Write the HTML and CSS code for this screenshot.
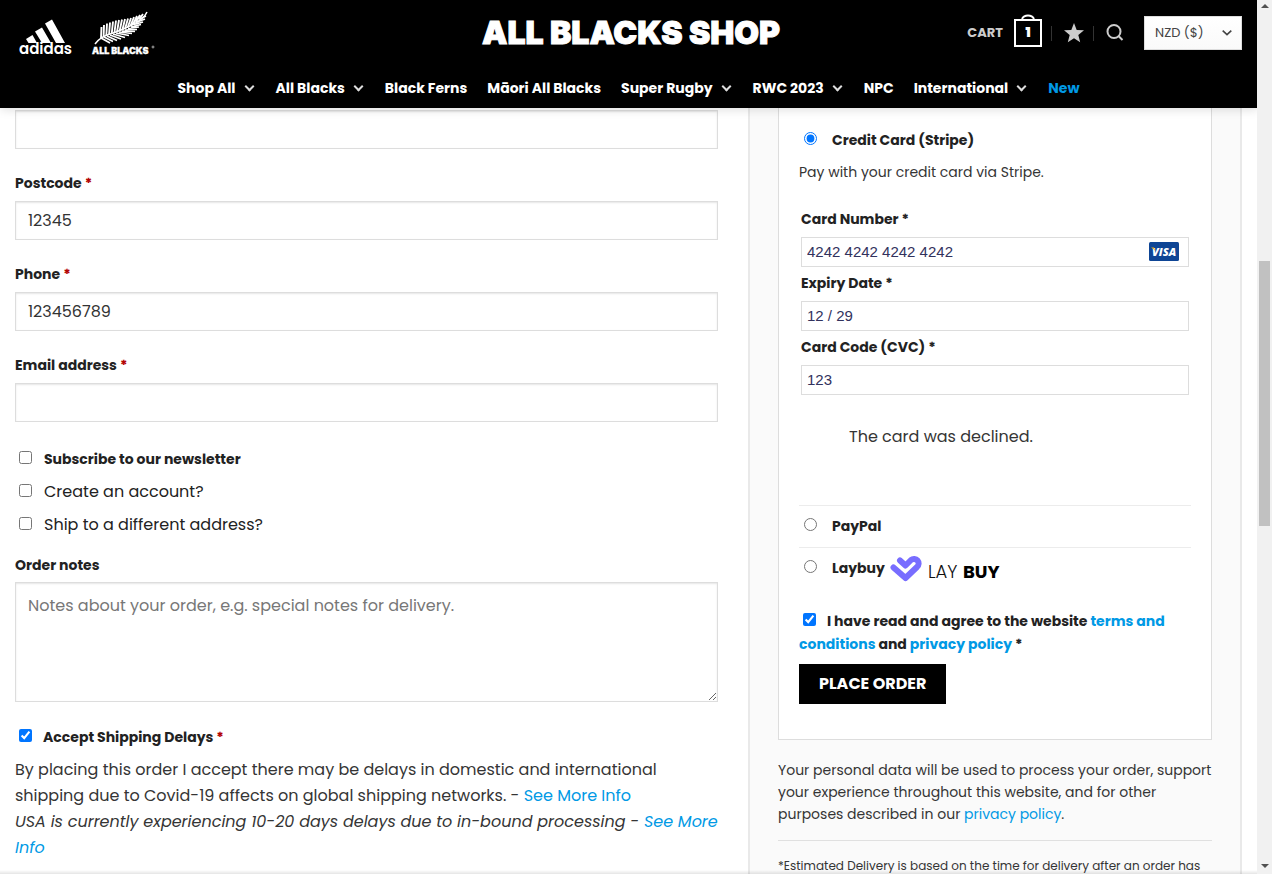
FILE: index.html
```html
<!DOCTYPE html>
<html lang="en">
<head>
<meta charset="utf-8">
<title>Checkout – All Blacks Shop</title>
<link rel="stylesheet" href="styles.css">
</head>
<body>
<div class="shell">
  <div class="page">
    <header class="header">
      <div class="masthead">
        <a class="brands" href="#" aria-label="adidas and All Blacks">
          <svg class="adidas" width="56" height="48" viewBox="0 -5 56 48" fill="#fff">
            <path d="M6 23 12.500 19 17 27H8.500ZM15 15.500 22 11.500 31 27H22ZM25 7.500 32 3.500 45 27H36Z"/>
            <text x="-1" y="38" class="adidas-text">adidas</text>
          </svg>
          <svg class="fern" width="64" height="48" viewBox="0 0 64 48" fill="none" stroke="#fff">
            <path stroke-width="1.500" d="M3 33Q8 26 18 23T40 14T55 1"/>
            <path stroke-width="1.900" d="M9 27 9.500 16M11.600 26 12 14M14.300 25 15 12.500M17 24 18 11.500M19.700 23 21 10.500M22.400 22 24 9.500M25 21 27 9M27.700 20 30 8.500M30.400 19 33 8M33 18 36 7.500M35.700 16.500 39 7M38.400 15 42 6M41 13.500 45 5M44 11 48 4M47 8.500 51 3"/>
            <path stroke-width="1.700" d="M9 27 18 32M12 26 21 30.500M15 25 25 29.500M18 24 29 28M21 23 33 26.500M24 22 37 24.500M27 21 40 22.500M30 20 43 20.500M33 19 45 18.500M36 17.500 47 16M39 16 49 13.500M42 13.500 51 11M45 11 53 8M48 8 54 5"/>
            <text x="0" y="43" class="fern-text">ALL BLACKS</text>
            <circle cx="61" cy="36" r="1" stroke-width=".6"/>
          </svg>
        </a>
        <a class="logo" href="#">ALL BLACKS SHOP</a>
        <div class="tools">
          <a class="cart" href="#">CART
            <span class="bag"><svg width="28" height="35" viewBox="0 0 28 35" fill="none" stroke="#fff" stroke-width="2"><path d="M1 8h26v26H1ZM8 7a6.500 5.500 0 0 1 12 0"/></svg><b>1</b></span>
          </a>
          <a class="tool" href="#" aria-label="Wishlist"><svg width="20" height="20" viewBox="0 0 20 20" fill="#ccc"><path d="m10 0 2.700 6.900 7.300.4-5.700 4.700 1.900 7.300L10 15.300l-6.200 4 1.900-7.300L0 7.300l7.300-.4Z"/></svg></a>
          <a class="tool" href="#" aria-label="Search"><svg width="18" height="18" viewBox="0 0 18 18" fill="none" stroke="#ccc" stroke-width="2"><circle cx="8" cy="7.500" r="6.500"/><path d="m12.500 12 4 4"/></svg></a>
          <span class="currency"><select aria-label="Currency"><option>NZD ($)</option></select><svg width="10" height="6" viewBox="0 0 10 6" fill="none" stroke="#444" stroke-width="1.600"><path d="m.7.700 4.300 4 4.300-4"/></svg></span>
        </div>
      </div>
      <nav class="nav">
        <a class="drop" href="#">Shop All</a>
        <a class="drop" href="#">All Blacks</a>
        <a href="#">Black Ferns</a>
        <a href="#">Māori All Blacks</a>
        <a class="drop" href="#">Super Rugby</a>
        <a class="drop" href="#">RWC 2023</a>
        <a href="#">NPC</a>
        <a class="drop" href="#">International</a>
        <a class="new" href="#">New</a>
      </nav>
    </header>

    <form class="checkout">
      <div class="billing">
        <input class="field first" type="text" aria-label="Region">
        <label class="label" for="postcode">Postcode <i>*</i></label>
        <input class="field" id="postcode" type="text" value="12345">
        <label class="label" for="phone">Phone <i>*</i></label>
        <input class="field" id="phone" type="tel" value="123456789">
        <label class="label" for="email">Email address <i>*</i></label>
        <input class="field" id="email" type="email">
        <div class="checks">
          <label class="check strong"><input type="checkbox">Subscribe to our newsletter</label>
          <label class="check"><input type="checkbox">Create an account?</label>
          <label class="check"><input type="checkbox">Ship to a different address?</label>
        </div>
        <label class="label notes-label" for="notes">Order notes</label>
        <textarea class="field notes" id="notes" placeholder="Notes about your order, e.g. special notes for delivery."></textarea>
        <label class="check strong accept"><input type="checkbox" checked><span>Accept Shipping Delays <i>*</i></span></label>
        <p class="delays">By placing this order I accept there may be delays in domestic and international<br>shipping due to Covid-19 affects on global shipping networks. - <a href="#">See More Info</a><br><em>USA is currently experiencing 10-20 days delays due to in-bound processing - <a href="#">See More<br>Info</a></em></p>
      </div>

      <div class="review">
        <div class="payment">
          <label class="method"><input type="radio" name="pay" checked>Credit Card (Stripe)</label>
          <p class="desc">Pay with your credit card via Stripe.</p>
          <div class="card">
            <label for="number">Card Number *</label>
            <div class="number">
              <input id="number" type="text" value="4242 4242 4242 4242">
              <svg class="visa" width="30" height="19" viewBox="0 0 30 19"><rect width="30" height="19" rx="1.500" fill="#0e4595"/><text x="3" y="13.500" class="visa-text">VISA</text><path d="M2 5.500h3l1.300 3.500Q4.500 6.500 2 5.500Z" fill="#f2ae14"/></svg>
            </div>
            <label for="expiry">Expiry Date *</label>
            <input id="expiry" type="text" value="12 / 29">
            <label for="cvc">Card Code (CVC) *</label>
            <input id="cvc" type="text" value="123">
          </div>
          <p class="error" role="alert">The card was declined.</p>
          <label class="method ruled"><input type="radio" name="pay">PayPal</label>
          <label class="method ruled"><input type="radio" name="pay">Laybuy
            <svg class="laybuy" width="112" height="28" viewBox="0 0 112 28" fill="none"><g stroke-linecap="round" stroke-linejoin="round" stroke="#786dff" stroke-width="6"><path d="m3.500 13.500 12 10.500L27 13a4.500 4.500 0 0 0-6-7L15.500 11.500 10 6.500"/></g><text x="38" y="23.500" class="lay">LAY</text><text x="73" y="23.500" class="buy">BUY</text></svg>
          </label>
          <div class="terms"><input id="terms" type="checkbox" checked><label for="terms">I have read and agree to the website <a href="#">terms and<br>conditions</a> and <a href="#">privacy policy</a> *</label></div>
          <button class="order" type="button">PLACE ORDER</button>
        </div>
        <p class="privacy">Your personal data will be used to process your order, support<br>your experience throughout this website, and for other<br>purposes described in our <a href="#">privacy policy</a>.</p>
        <p class="estimate">*Estimated Delivery is based on the time for delivery after an order has</p>
      </div>
    </form>
    <div class="edge"></div>
  </div>
  <div class="scrollbar" aria-hidden="true"><span class="up"></span><span class="thumb"></span><span class="down"></span></div>
</div>
</body>
</html>
```
FILE: styles.css
```css
* { box-sizing: border-box; }
body {
  margin: 0;
  font: 15px/24px Poppins, Inter, "Open Sans", sans-serif;
  color: #353535;
  background: #fff;
}
p { margin: 0; }
a { color: #0099e5; text-decoration: none; }
i { color: #b20000; font-style: normal; }
input[type="checkbox"], input[type="radio"] { width: 13px; height: 13px; margin: 0; flex: none; }

.shell { display: flex; height: 100vh; overflow: hidden; }
.page { position: relative; flex: 1; min-width: 0; overflow: hidden; }

/* Header */
.header {
  position: relative;
  z-index: 2;
  background: #000;
  box-shadow: 1px 1px 10px rgba(0, 0, 0, .15);
}
.masthead {
  display: grid;
  grid-template-columns: 1fr auto 1fr;
  align-items: center;
  height: 68px;
  padding: 0 15px 2px 20px;
}
.brands { display: flex; align-items: flex-end; gap: 16px; padding-top: 4px; }
.adidas-text { font: 600 15px Poppins, Inter, sans-serif; }
.fern, .adidas { overflow: visible; }
.fern-text { font: 900 9px Inter, sans-serif; fill: #fff; stroke: #fff; stroke-width: .3px; }
.logo { color: #fff; font: 900 32px/40px Inter, sans-serif; -webkit-text-stroke: 1px #fff; }
.tools { display: flex; justify-content: flex-end; align-items: center; }
.cart { display: flex; align-items: center; gap: 11px; color: #ccc; font-size: 13px; font-weight: 700; }
.bag { position: relative; display: flex; height: 42px; }
.bag b { position: absolute; inset: 9px 0 auto; text-align: center; color: #fff; font-size: 13px; }
.tool { display: flex; align-items: center; height: 15px; padding-left: 12px; margin-left: 9px; border-left: 1px solid #333; }
.currency { position: relative; display: flex; align-items: center; margin-left: 20px; }
.currency select {
  appearance: none;
  width: 98px;
  height: 34px;
  padding: 0 10px 2px;
  border: 1px solid #ddd;
  border-radius: 0;
  background: linear-gradient(#fff, #fafafa);
  color: #444;
  font: 13px Poppins, Inter, sans-serif;
}
.currency svg { position: absolute; right: 10px; pointer-events: none; }
.nav { display: flex; justify-content: center; gap: 20px; height: 40px; line-height: 40px; }
.nav a { display: flex; align-items: center; gap: 10px; color: #fff; font-size: 14px; font-weight: 700; }
.nav .drop::after {
  content: "";
  width: 5px;
  height: 5px;
  margin: 0 3px 4px 0;
  border: solid #ddd;
  border-width: 0 2px 2px 0;
  transform: rotate(45deg);
}
.nav .new { color: #0099e5; }

/* Billing */
.checkout { display: flex; align-items: stretch; padding: 0 15px; }
.billing { flex: 703; padding-right: 30px; min-width: 0; }
.label { display: block; margin: 21px 0 5px; line-height: 26px; font-size: 14px; font-weight: 700; color: #222; }
.field {
  display: block;
  width: 100%;
  height: 39px;
  padding: 0 12px;
  border: 1px solid #ddd;
  border-radius: 0;
  background: #fff;
  box-shadow: inset 0 1px 2px rgba(0, 0, 0, .1);
  color: #333;
  font: 16px Poppins, Inter, sans-serif;
}
.first { margin-top: 2px; }
.checks { margin-top: 20px; }
.check { display: flex; align-items: center; gap: 12px; height: 33px; padding-left: 4px; color: #222; font-size: 16px; }
.check input[type="checkbox"] { margin-bottom: 2px; }
.strong { font-size: 14px; font-weight: 700; }
.notes-label { margin: 11px 0 4px; }
.notes { height: 120px; padding: 11px 12px; line-height: 24px; resize: vertical; }
.notes::placeholder { color: #777; }
.accept { margin-top: 18px; gap: 11px; }
.delays { margin-top: 4px; font-size: 16px; line-height: 26px; white-space: nowrap; }

/* Order review */
.review {
  flex: 494 0 0;
  max-width: 494px;
  padding: 0 28px;
  border: solid #e9e9e9;
  border-width: 0 2px;
  background: #fafafa;
}
.payment { padding: 20px 20px 35px; border: 1px solid #ddd; border-top: 0; background: #fff; }
.method { display: flex; align-items: center; gap: 15px; padding-left: 5px; font-size: 14px; font-weight: 700; color: #222; }
.method input[type="radio"] { margin-bottom: 3px; }
.method .laybuy { margin-left: -10px; }
.ruled { height: 42px; padding-bottom: 1px; border-top: 1px solid #ececec; }
.desc { margin-top: 8px; font-size: 14px; }
.card { margin-top: 19px; padding: 0 2px; }
.card label { display: block; height: 34px; line-height: 32px; font-size: 14px; font-weight: 700; color: #222; }
.card input {
  display: block;
  width: 100%;
  height: 30px;
  padding: 0 5px 2px;
  border: 1px solid #ddd;
  color: #32325d;
  font: 15px "Liberation Sans", Arial, sans-serif;
}
.number { position: relative; }
.visa { position: absolute; top: 5px; right: 10px; }
.visa-text { font: italic 800 11px "Open Sans", sans-serif; fill: #fff; }
.error { margin: 30px 50px 56px; font-size: 16px; }
.lay { font: 300 18px Poppins, Lato, sans-serif; fill: #111; }
.buy { font: 700 18px Poppins, Lato, sans-serif; fill: #000; }
.terms { margin-top: 21px; font-size: 14px; line-height: 23px; font-weight: 700; color: #222; white-space: nowrap; }
.terms input[type="checkbox"] { margin: 0 11px 0 4px; vertical-align: 0; }
.order {
  height: 40px;
  margin-top: 8px;
  padding: 0 20px 1px;
  border: 0;
  background: #000;
  color: #fff;
  font: 700 16px Poppins, Inter, sans-serif;
}
.privacy { padding: 19px 0 15px; border-bottom: 1px solid #e0e0e0; font-size: 14px; line-height: 22px; white-space: nowrap; }
.estimate { padding: 13px 0; font-size: 12px; white-space: nowrap; }

/* Top edge of the bar docked below the view */
.edge { position: absolute; inset: auto 0 0; height: 4px; background: linear-gradient(rgba(0, 0, 0, 0), rgba(0, 0, 0, .1)); }

.scrollbar { display: flex; flex-direction: column; align-items: center; width: 15px; background: #f1f1f1; }
.scrollbar .up, .scrollbar .down { border: 4px solid transparent; }
.scrollbar .up { margin-top: 4px; border-top-width: 0; border-bottom-color: #505050; }
.scrollbar .down { margin: auto 0 6px; border-bottom-width: 0; border-top-color: #505050; }
.thumb { width: 11px; height: 265px; margin-top: 253px; background: #c1c1c1; }
```
